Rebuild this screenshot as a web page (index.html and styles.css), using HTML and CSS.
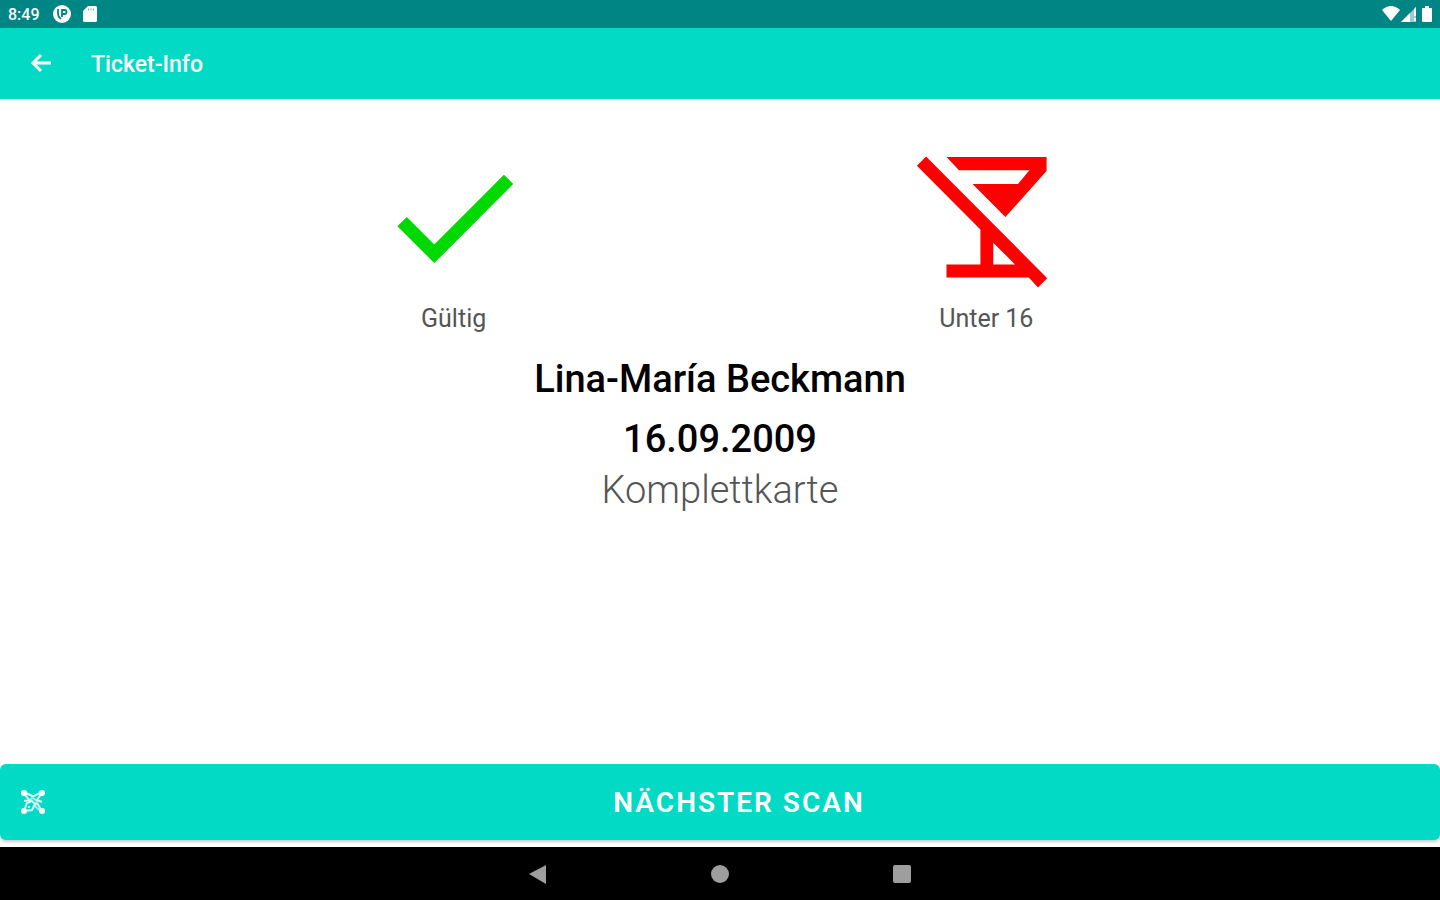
FILE: index.html
```html
<!DOCTYPE html>
<html lang="de">
<head>
    <meta charset="UTF-8">
    <title>Ticket-Info</title>
    <link rel="stylesheet" href="styles.css">
</head>
<body>
    <div class="status-bar">
        <div class="status-left">
            <span class="clock">8:49</span>
            <svg class="status-icon" viewBox="0 0 18 18">
                <circle cx="9" cy="9" r="9" fill="#fff"/>
                <path d="M5 4v5c0 3 2 4 3 5M9 12V5h2.500a2 2 0 0 1 0 4H9" fill="none" stroke="#008585" stroke-width="1.800"/>
            </svg>
            <svg class="status-icon" viewBox="0 0 18 18">
                <path d="M7 1h7.500a1.500 1.500 0 0 1 1.500 1.500v13a1.500 1.500 0 0 1-1.500 1.500h-11A1.500 1.500 0 0 1 2 15.500V6z" fill="#fff"/>
                <path d="M7.500 3.500v2M10 3.500v2M12.500 3.500v2" stroke="#008585" stroke-opacity=".6"/>
            </svg>
        </div>
        <div class="status-right">
            <svg class="status-icon" viewBox="0 0 18 18">
                <path d="M9 16L0 5q9-8 18 0z" fill="#fff"/>
            </svg>
            <svg class="status-icon" viewBox="0 0 18 18">
                <path d="M1 17L16 2v15z" fill="#fff" fill-opacity=".6"/>
                <path d="M1 17L10 8v9zM14 4l2-2v9h-2zM14 13h2v3h-2z" fill="#fff"/>
            </svg>
            <svg class="status-icon" viewBox="0 0 18 18">
                <path d="M7 1h4v2h2a1 1 0 0 1 1 1v12a1 1 0 0 1-1 1H5a1 1 0 0 1-1-1V4a1 1 0 0 1 1-1h2z" fill="#fff"/>
            </svg>
        </div>
    </div>

    <header class="app-bar">
        <button class="back-button" type="button" aria-label="Zurück">
            <svg viewBox="0 0 30 30" width="30" height="30">
                <path d="M26 14H12M16 6l-8 8 8 8M8 14h8" fill="none" stroke="#fff" stroke-width="3"/>
            </svg>
        </button>
        <h1 class="title">Ticket-Info</h1>
    </header>

    <main class="content">
        <div class="checks">
            <div class="check">
                <svg class="check-icon" viewBox="0 0 24 24">
                    <path d="M9 16.170L4.830 12l-1.420 1.410L9 19 21 7l-1.410-1.410z" fill="#00d900"/>
                </svg>
                <span class="check-label">Gültig</span>
            </div>
            <div class="check">
                <!-- crossed out cocktail glass -->
                <svg class="check-icon" viewBox="0 0 24 24">
                    <path d="M6 2.900H21.200V5L14.950 12 9.950 7H16.850L18.600 4.900H7.900z" fill="#f00"/>
                    <path fill-rule="evenodd" d="M2.900 2.800L1.500 4.200 11.150 13.900V19.200H6V21.200H18.500L19.900 22.700 21.300 21.300zM13.100 15.900V19.200H16.400z" fill="#f00"/>
                </svg>
                <span class="check-label">Unter 16</span>
            </div>
        </div>
        <p class="name">Lina-María Beckmann</p>
        <p class="birthday">16.09.2009</p>
        <p class="ticket-type">Komplettkarte</p>
    </main>

    <button class="scan-button" type="button">
        <svg class="scan-icon" viewBox="0 0 26 26">
            <g fill="none" stroke="#fff" stroke-opacity=".85" stroke-width="2">
                <path d="M4 4l5 7-5 1M22 4l-5 7 5 2M4 3l8 4h2l8-4M22 22l-5-8M4 22l3-8 5-2 3 3-3 6z"/>
                <path d="M9 11l4-2 4 3-2 5 4 4" stroke-opacity=".6"/>
            </g>
            <circle cx="9" cy="18" r="1" fill="#fff"/>
            <g fill="#fff">
                <circle cx="4" cy="4" r="3"/>
                <circle cx="22" cy="4" r="3"/>
                <circle cx="4" cy="22" r="3"/>
                <circle cx="22" cy="22" r="3"/>
            </g>
        </svg>
        <span class="scan-text">Nächster Scan</span>
    </button>

    <nav class="nav-bar">
        <button class="nav-button" type="button" aria-label="Zurück">
            <svg viewBox="0 0 20 20" width="20" height="20"><path d="M1 10L18 1v19z" fill="#9e9e9e"/></svg>
        </button>
        <button class="nav-button" type="button" aria-label="Startseite">
            <svg viewBox="0 0 20 20" width="20" height="20"><circle cx="10" cy="10" r="9" fill="#9e9e9e"/></svg>
        </button>
        <button class="nav-button" type="button" aria-label="Übersicht">
            <svg viewBox="0 0 20 20" width="20" height="20"><rect x="1" y="1" width="18" height="18" rx="2" fill="#9e9e9e"/></svg>
        </button>
    </nav>
</body>
</html>
```

FILE: styles.css
```css
* {
    box-sizing: border-box;
}

body {
    margin: 0;
    min-height: 100vh;
    display: flex;
    flex-direction: column;
    background-color: #ffffff;
    font-family: Roboto, sans-serif;
    color: #000000;
}

button {
    border: none;
    padding: 0;
    background: none;
    font-family: inherit;
    cursor: pointer;
}

svg {
    display: block;
}

.status-bar {
    display: flex;
    justify-content: space-between;
    align-items: center;
    height: 28px;
    padding: 0 4px 0 8px;
    background-color: #008585;
}

.status-left {
    display: flex;
    align-items: center;
    gap: 10px;
}

.status-right {
    display: flex;
    align-items: center;
}

.status-icon {
    width: 18px;
    height: 18px;
}

.clock {
    width: 35px;
    font-size: 16px;
    font-weight: 500;
    color: #ffffff;
}

.app-bar {
    display: flex;
    align-items: center;
    gap: 36px;
    height: 71px;
    padding: 0 25px;
    background-color: #03dac6;
}

.title {
    margin: 0;
    padding-top: 3px;
    font-size: 23px;
    line-height: 28px;
    font-weight: 500;
    color: #ffffff;
}

.content {
    flex: 1;
    padding-top: 39px;
    text-align: center;
}

.checks {
    display: flex;
    justify-content: space-evenly;
    margin-bottom: 14px;
}

.check {
    display: flex;
    flex-direction: column;
    align-items: center;
    gap: 7px;
}

.check-icon {
    width: 158px;
    height: 158px;
}

.check-label {
    font-size: 25px;
    line-height: 32px;
    color: #555555;
}

.name,
.birthday {
    margin: 0;
    font-size: 38px;
    line-height: 60px;
    font-weight: 500;
}

.ticket-type {
    margin: 0;
    font-size: 38px;
    line-height: 42px;
    font-weight: 300;
    color: #555555;
}

.scan-button {
    display: flex;
    align-items: center;
    height: 76px;
    margin-bottom: 7px;
    padding: 0 20px;
    border-radius: 6px;
    background-color: #03dac6;
    box-shadow: 0 2px 3px rgba(0, 0, 0, 0.2);
    color: #ffffff;
}

.scan-icon {
    width: 26px;
    height: 26px;
}

.scan-text {
    flex: 1;
    padding-left: 12px;
    font-size: 28px;
    font-weight: 600;
    letter-spacing: 2px;
    text-transform: uppercase;
}

.nav-bar {
    display: flex;
    justify-content: center;
    align-items: center;
    gap: 162px;
    height: 53px;
    background-color: #000000;
}
```
